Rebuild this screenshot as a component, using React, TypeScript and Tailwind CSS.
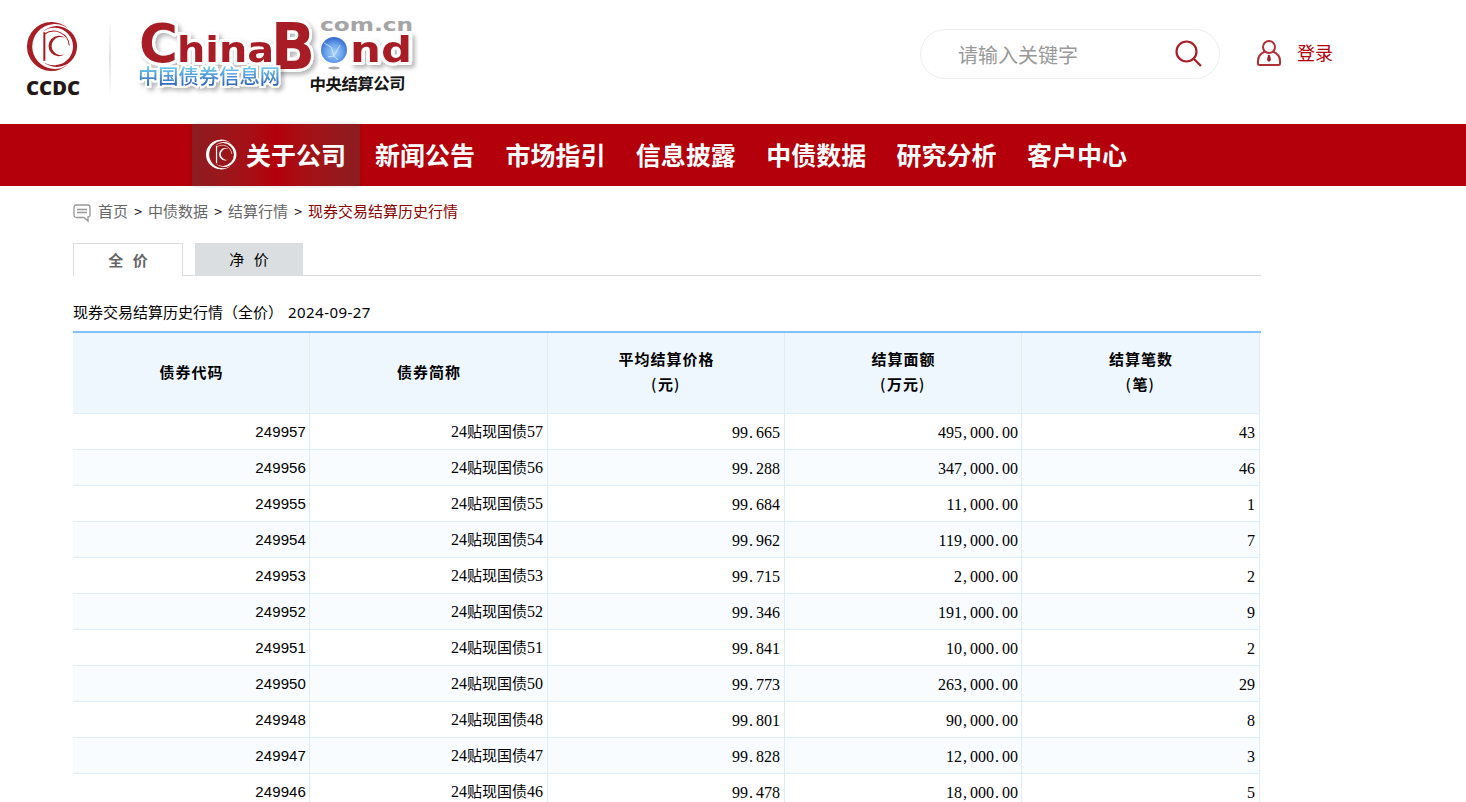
import React from 'react';

const navItems = ['新闻公告', '市场指引', '信息披露', '中债数据', '研究分析', '客户中心'];

const columns: { title: string; unit?: string }[] = [
  { title: '债券代码' },
  { title: '债券简称' },
  { title: '平均结算价格', unit: '元' },
  { title: '结算面额', unit: '万元' },
  { title: '结算笔数', unit: '笔' },
];

const rows: [string, string, string, string, string][] = [
  ['249957', '57', '99.665', '495,000.00', '43'],
  ['249956', '56', '99.288', '347,000.00', '46'],
  ['249955', '55', '99.684', '11,000.00', '1'],
  ['249954', '54', '99.962', '119,000.00', '7'],
  ['249953', '53', '99.715', '2,000.00', '2'],
  ['249952', '52', '99.346', '191,000.00', '9'],
  ['249951', '51', '99.841', '10,000.00', '2'],
  ['249950', '50', '99.773', '263,000.00', '29'],
  ['249948', '48', '99.801', '90,000.00', '8'],
  ['249947', '47', '99.828', '12,000.00', '3'],
  ['249946', '46', '99.478', '18,000.00', '5'],
];

/* Numbers with every character, punctuation included, on an 8px pitch. */
function Fixed({ value }: { value: string }) {
  return (
    <>
      {value.split(/([.,])/).map((part, i) =>
        part === '.' || part === ',' ? (
          <span key={i} className="inline-block w-2 pl-px text-left">{part}</span>
        ) : (
          <React.Fragment key={i}>{part}</React.Fragment>
        ),
      )}
    </>
  );
}

function Emblem({ className }: { className: string }) {
  return (
    <svg className={className} viewBox="0 0 50 50" fill="currentColor">
      <path d="M40.200 7.300A24 24 0 1 0 40.200 42.700A22 22 0 1 1 40.200 7.300Z" />
      <path d="M15 10.800A20 20 0 1 1 15 39.200A18.400 18.400 0 1 0 15 10.800Z" />
      <path d="M17 11V39" fill="none" stroke="currentColor" strokeWidth="2" />
      <path d="M17 13C27 6 40.500 12 41.500 24" fill="none" stroke="currentColor" strokeWidth="1" />
      <path d="M37.500 16.800A10 10 0 1 0 37.500 32.200A8.900 8.900 0 1 1 37.500 16.800Z" />
    </svg>
  );
}

function BrandLogo() {
  return (
    <svg width="440" height="120" viewBox="0 0 440 120" className="block">
      <defs>
        <linearGradient id="sky" x1="0" y1="0" x2="0" y2="1">
          <stop offset="0.25" stopColor="#74cdf2" />
          <stop offset="0.85" stopColor="#2f63c0" />
        </linearGradient>
        <radialGradient id="globe" cx="0.5" cy="0.6" r="0.55">
          <stop offset="0" stopColor="#a9d2f8" />
          <stop offset="0.6" stopColor="#69a3ec" />
          <stop offset="1" stopColor="#3c70d0" />
        </radialGradient>
        <linearGradient id="rule" x1="0" y1="0" x2="0" y2="1">
          <stop offset="0" stopColor="#fff" />
          <stop offset="0.5" stopColor="#e2e2e2" />
          <stop offset="1" stopColor="#fff" />
        </linearGradient>
        <filter id="lift" x="-10%" y="-20%" width="125%" height="150%">
          <feDropShadow dx="3" dy="3" stdDeviation="2" floodColor="#000" floodOpacity="0.28" />
        </filter>
      </defs>
      <text x="26" y="94.500" textLength="54" lengthAdjust="spacingAndGlyphs" className="font-['Open_Sans',sans-serif] text-[19px] font-extrabold" fill="#231815">CCDC</text>
      <rect x="109" y="20" width="2" height="76" fill="url(#rule)" />
      <g filter="url(#lift)" fill="#a81e25" stroke="#fff" strokeWidth="6" strokeLinejoin="round" className="font-['DejaVu_Sans',sans-serif] font-bold [paint-order:stroke]">
        <text x="271" y="69" fontSize="64" textLength="44" lengthAdjust="spacingAndGlyphs">B</text>
        <text x="139" y="61.500" fontSize="53" textLength="39" lengthAdjust="spacingAndGlyphs">C</text>
        <text x="177" y="62" fontSize="36" textLength="97" lengthAdjust="spacingAndGlyphs">hina</text>
        <text x="350" y="62" fontSize="36" textLength="62" lengthAdjust="spacingAndGlyphs">nd</text>
      </g>
      <text x="320" y="31" fontSize="18" textLength="93" lengthAdjust="spacingAndGlyphs" fill="#a5a5a5" stroke="#fff" strokeWidth="2" className="font-['DejaVu_Sans',sans-serif] font-bold [paint-order:stroke]">com.cn</text>
      <ellipse cx="334" cy="68" rx="6" ry="1.500" fill="#aaa" />
      <circle cx="334" cy="50" r="13" fill="url(#globe)" />
      <path d="M324 43L331 47L334 56L340 45M328 57L334 56L338 60" fill="none" stroke="#d8ecff" strokeWidth="1" opacity="0.8" />
      <text x="138" y="83.500" fontSize="20.300" textLength="142" fill="url(#sky)" stroke="#fff" strokeWidth="4" filter="url(#lift)" className="font-['Noto_Sans_CJK_SC',sans-serif] font-medium [paint-order:stroke]">中国债券信息网</text>
      <text x="310" y="90" fontSize="16.500" textLength="96" fill="#161616" transform="rotate(-0.8 357 84) skewX(-3) translate(4 0)" className="font-['Noto_Sans_CJK_SC',sans-serif] font-bold">中央结算公司</text>
    </svg>
  );
}

export default function App() {
  return (
    <div className="h-[802px] w-full overflow-hidden bg-white font-['Noto_Sans_CJK_SC',sans-serif] text-[15px] text-black">
      <header className="flex h-[124px]">
        <div className="relative w-[920px]">
          <Emblem className="absolute left-[27px] top-[21px] size-[51px] text-[#a81e25]" />
          <BrandLogo />
        </div>
        <div className="mt-[29px] flex h-[50px] w-[300px] items-center justify-between rounded-full border border-[#eee] pl-[37px] pr-[17px]">
          <span className="pt-[2px] text-xl leading-none text-[#999]">请输入关键字</span>
          <svg width="27" height="27" viewBox="0 0 27 27" fill="none" stroke="#a81e2b" strokeWidth="2.200" className="-mt-px">
            <circle cx="11.500" cy="11.500" r="10" />
            <path d="M18.500 18.500L26 26" />
          </svg>
        </div>
        <a className="ml-[37px] mt-[28px] flex h-[50px] items-center gap-4 text-lg leading-none text-[#b3000b]">
          <svg width="24" height="26" viewBox="0 0 24 26" fill="none" stroke="#b03038" strokeWidth="2">
            <circle cx="12" cy="7" r="6" />
            <path d="M8 11.500C3.500 13.500 1 17 1 21V23.500Q1 25 2.500 25H21.500Q23 25 23 23.500V21C23 17 20.500 13.500 16 11.500" />
            <path d="M11 15H13L14 20L12 22L10 20Z" fill="#a81e2b" stroke="none" />
          </svg>
          <span className="-mt-[2px]">登录</span>
        </a>
      </header>

      <nav className="flex h-[62px] bg-[#b3000b] pl-[192px] text-[25px] font-bold leading-[60px] text-white">
        <a className="flex w-[168px] items-center bg-linear-to-r from-[#8c1c20] via-[#b3000b] to-[#8c1c20] pl-[14px] shadow-[0_0_4px_rgba(0,0,0,0.15)]">
          <Emblem className="-mt-[2px] mr-[9px] size-[31px]" />
          <span className="-mt-[2px]">关于公司</span>
        </a>
        {navItems.map((item) => (
          <a key={item} className="w-[130.400px] pl-[15px]">{item}</a>
        ))}
      </nav>

      <main className="ml-[73px] w-[1188px]">
        <div className="flex h-[57px] items-center pb-[7px] text-[#666]">
          <svg width="19" height="19" viewBox="0 0 19 19" fill="none" stroke="#999" strokeWidth="1.300" className="mr-[6px] mt-[5px]">
            <path d="M3.500 1H14.500Q17 1 17 3.500V10.500Q17 13 15 13V17L11 13.500H3.500Q1 13.500 1 11V3.500Q1 1 3.500 1Z" />
            <path d="M4 5.500H14M4 8.500H14" />
          </svg>
          <a>首页</a>
          <span className="w-5 pb-px text-center text-sm text-black">&gt;</span>
          <a>中债数据</a>
          <span className="w-5 pb-px text-center text-sm text-black">&gt;</span>
          <a>结算行情</a>
          <span className="w-5 pb-px text-center text-sm text-black">&gt;</span>
          <a className="text-[#8b0000]">现券交易结算历史行情</a>
        </div>

        <div className="flex h-[33px]">
          <div className="w-[110px] border border-b-0 border-[#d9dde1] text-center font-bold leading-[31px] text-[#666] [word-spacing:6px]">全 价</div>
          <div className="w-3 border-b border-[#d9dde1]" />
          <div className="w-[108px] bg-[#dadee1] text-center leading-[32px] [word-spacing:6px]">净 价</div>
          <div className="flex-1 border-b border-[#d9dde1]" />
        </div>

        <div className="flex h-[55px] items-end pb-2 leading-[22px]">
          <span>现券交易结算历史行情（全价）</span>
          <span className="ml-[5px] font-['Noto_Sans',sans-serif] tracking-[0.45px]">2024-09-27</span>
        </div>

        <div className="border-t-2 border-[#7fc1fb]">
          <div className="grid h-[81px] w-[1187px] grid-cols-[237px_238px_237px_237px_238px] bg-[#eef6fe]">
            {columns.map(({ title, unit }) => (
              <div key={title} className="flex flex-col items-center justify-center border-b border-r border-[#dfedf8] pb-1 font-bold leading-[25px] tracking-[1px]">
                <span className="pl-px">{title}</span>
                {unit && (
                  <span className="pt-px leading-6">
                    <span className="inline-block w-[7px] font-medium">(</span>
                    {unit}
                    <span className="inline-block w-[7px] font-medium">)</span>
                  </span>
                )}
              </div>
            ))}
          </div>
          {rows.map(([code, suffix, price, amount, count], i) => (
            <div
              key={code}
              className={`grid w-[1187px] grid-cols-[237px_238px_237px_237px_238px] grid-rows-[36px] text-right font-['Liberation_Serif','Noto_Sans_CJK_SC',serif] text-base leading-[37px] *:h-9 *:border-b *:border-r *:border-[#dfedf8] ${i % 2 ? 'bg-[#f8fcff]' : 'bg-white'}`}
            >
              <div className="pr-[3px] font-['Liberation_Sans',sans-serif] text-[15px] leading-[35px] tracking-[0.1px]">{code}</div>
              <div className="pr-1 leading-[33px]">
                24<span className="font-['Noto_Sans_CJK_SC',sans-serif] text-[15px]">贴现国债</span>{suffix}
              </div>
              <div className="pr-1"><Fixed value={price} /></div>
              <div className="pr-[3px]"><Fixed value={amount} /></div>
              <div className="pr-1">{count}</div>
            </div>
          ))}
        </div>
      </main>
    </div>
  );
}
